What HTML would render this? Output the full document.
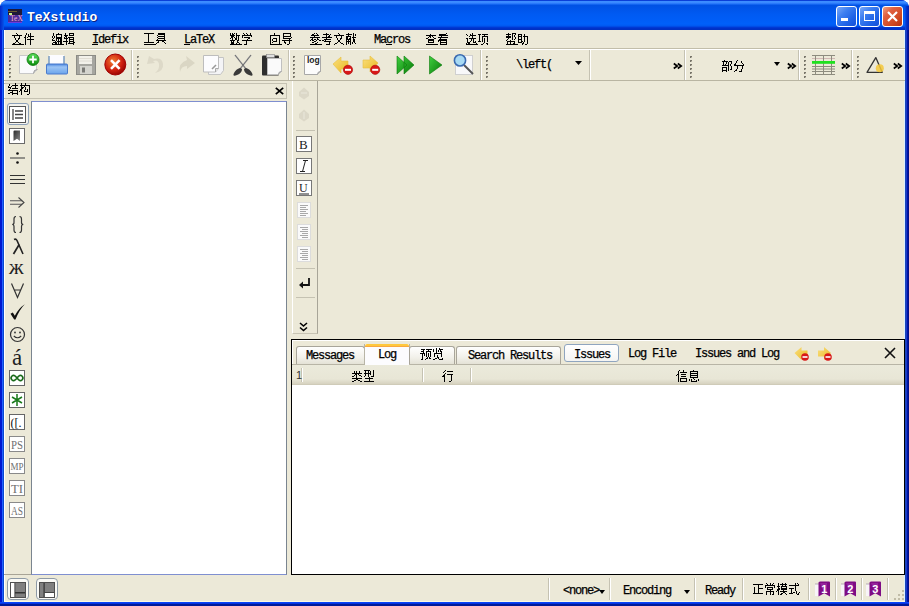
<!DOCTYPE html><html><head><meta charset="utf-8"><style>
html,body{margin:0;padding:0;width:909px;height:606px;overflow:hidden;background:#fff;}
body>div,body>span,body>svg{position:absolute;}
.t{position:absolute;white-space:pre;line-height:14px;}
.cj{position:absolute;shape-rendering:crispEdges;}
svg{overflow:visible;}
</style></head><body>
<div style="left:0px;top:0px;width:909px;height:606px;background:#0831D9;border-radius:8px 8px 0 0;"></div>
<div style="left:0px;top:0px;width:909px;height:30px;background:linear-gradient(#0A3FD8 0px,#0A3FD8 1px,#3D8EFF 1px,#3A88FF 3px,#1A6CF6 4px,#0052E4 5.5px,#0054E8 8px,#005AF2 14px,#0060FA 24px,#0058F0 26px,#0040DC 27px,#0032CC 28px,#0030C0 30px);border-radius:8px 8px 0 0;"></div>
<div style="left:0px;top:6px;width:4px;height:24px;background:linear-gradient(90deg,#0028C8,#0848E0 3px,#0058F0 4px);"></div>
<div style="left:905px;top:6px;width:4px;height:24px;background:linear-gradient(90deg,#0850E8,#0838D0 1px,#0028C0 3px,#0020B0 4px);"></div>
<div style="left:0px;top:30px;width:4px;height:576px;background:linear-gradient(90deg,#0018D0 0px,#0018D0 2px,#2262FF 2px,#2262FF 3px,#0A48D0 3px);"></div>
<div style="left:4px;top:30px;width:1px;height:572px;background:#FFFFFF;"></div>
<div style="left:905px;top:30px;width:4px;height:576px;background:linear-gradient(90deg,#1A48B8 0px,#1A48B8 1px,#1A3AC8 1px,#1A3AC8 2px,#0014A8 2px,#0014A8 3px,#001088 3px);"></div>
<div style="left:904px;top:30px;width:1px;height:572px;background:#DCEEFF;"></div>
<div style="left:0px;top:602px;width:909px;height:4px;background:linear-gradient(#0844F8 0px,#0844F8 1px,#0634E0 1px,#0634E0 2px,#001A98 2px);"></div>
<div style="left:4px;top:601px;width:901px;height:1px;background:#FBF8E2;"></div>
<div style="left:5px;top:30px;width:899px;height:571px;background:#ECE9D8;"></div>
<svg style="left:8px;top:9px;" width="14" height="14" viewBox="0 0 14 14"><rect x="0" y="0" width="14" height="14" fill="#4A2A9A"/><rect x="0" y="0" width="14" height="6" fill="#1E1838"/><rect x="0" y="2" width="9" height="1" fill="#6A5A30"/><rect x="1" y="4" width="3" height="2" fill="#C8F080"/><rect x="0" y="13" width="14" height="1" fill="#6A3AE0"/><text x="2" y="12" font-family="Liberation Serif" font-size="7.5" fill="#F0B0D0">TeX</text></svg>
<span class="t" style="left:27px;top:11px;font-family:Liberation Mono;font-weight:bold;font-size:13px;letter-spacing:0px;color:#0A1E80;left:28px;top:12px;">TeXstudio</span>
<span class="t" style="left:27px;top:11px;font-family:Liberation Mono;font-weight:bold;font-size:13px;color:#fff;letter-spacing:0px;">TeXstudio</span>
<div style="left:836px;top:6px;width:21px;height:21px;background:linear-gradient(135deg,#7AA8F8 0%,#3C7EF0 35%,#1F62E6 70%,#1550D8 100%);border:1px solid #fff;box-sizing:border-box;border-radius:3px;"></div>
<div style="left:841px;top:18px;width:7px;height:3px;background:#fff;"></div>
<div style="left:859px;top:6px;width:21px;height:21px;background:linear-gradient(135deg,#7AA8F8 0%,#3C7EF0 35%,#1F62E6 70%,#1550D8 100%);border:1px solid #fff;box-sizing:border-box;border-radius:3px;"></div>
<div style="left:864px;top:11px;width:11px;height:10px;border:1px solid #fff;border-top-width:3px;box-sizing:border-box;"></div>
<div style="left:882px;top:6px;width:21px;height:21px;background:linear-gradient(135deg,#F0A080 0%,#E06040 30%,#D04820 70%,#B83010 100%);border:1px solid #fff;box-sizing:border-box;border-radius:3px;"></div>
<svg style="left:886px;top:10px;" width="13" height="13" viewBox="0 0 13 13"><path d="M2 2L11 11M11 2L2 11" stroke="#fff" stroke-width="2.2"/></svg>
<svg class="cj" style="left:12px;top:33px" width="22" height="12"><path fill="#000" d="M4 0h1v1h-1zM14 0h1v1h-1zM18 0h1v1h-1zM5 1h1v1h-1zM14 1h1v1h-1zM16 1h1v1h-1zM18 1h1v1h-1zM0 2h10v1h-10zM13 2h1v1h-1zM16 2h1v1h-1zM18 2h1v1h-1zM2 3h1v1h-1zM7 3h1v1h-1zM13 3h1v1h-1zM16 3h6v1h-6zM2 4h1v1h-1zM7 4h1v1h-1zM12 4h2v1h-2zM15 4h1v1h-1zM18 4h1v1h-1zM3 5h1v1h-1zM6 5h2v1h-2zM13 5h1v1h-1zM18 5h1v1h-1zM3 6h1v1h-1zM6 6h1v1h-1zM13 6h1v1h-1zM15 6h7v1h-7zM4 7h2v1h-2zM13 7h1v1h-1zM18 7h1v1h-1zM4 8h2v1h-2zM13 8h1v1h-1zM18 8h1v1h-1zM3 9h1v1h-1zM6 9h1v1h-1zM13 9h1v1h-1zM18 9h1v1h-1zM1 10h2v1h-2zM7 10h2v1h-2zM13 10h1v1h-1zM18 10h1v1h-1zM0 11h1v1h-1zM9 11h1v1h-1zM13 11h1v1h-1zM18 11h1v1h-1z"/></svg>
<svg class="cj" style="left:52px;top:33px" width="23" height="12"><path fill="#000" d="M1 0h1v1h-1zM6 0h1v1h-1zM13 0h1v1h-1zM17 0h5v1h-5zM1 1h1v1h-1zM4 1h6v1h-6zM13 1h1v1h-1zM17 1h1v1h-1zM21 1h1v1h-1zM1 2h1v1h-1zM4 2h1v1h-1zM9 2h1v1h-1zM12 2h4v1h-4zM17 2h5v1h-5zM0 3h1v1h-1zM2 3h1v1h-1zM4 3h1v1h-1zM9 3h1v1h-1zM13 3h2v1h-2zM0 4h1v1h-1zM2 4h1v1h-1zM4 4h6v1h-6zM12 4h1v1h-1zM14 4h1v1h-1zM16 4h6v1h-6zM1 5h1v1h-1zM4 5h6v1h-6zM12 5h4v1h-4zM17 5h1v1h-1zM21 5h1v1h-1zM0 6h1v1h-1zM4 6h1v1h-1zM6 6h1v1h-1zM8 6h2v1h-2zM14 6h1v1h-1zM17 6h5v1h-5zM0 7h3v1h-3zM4 7h1v1h-1zM6 7h1v1h-1zM8 7h2v1h-2zM14 7h1v1h-1zM17 7h1v1h-1zM21 7h1v1h-1zM3 8h1v1h-1zM5 8h5v1h-5zM11 8h5v1h-5zM17 8h5v1h-5zM1 9h4v1h-4zM6 9h1v1h-1zM8 9h2v1h-2zM14 9h1v1h-1zM17 9h1v1h-1zM21 9h2v1h-2zM0 10h1v1h-1zM3 10h2v1h-2zM6 10h1v1h-1zM8 10h2v1h-2zM14 10h1v1h-1zM16 10h6v1h-6zM3 11h1v1h-1zM9 11h1v1h-1zM14 11h1v1h-1zM21 11h1v1h-1z"/></svg>
<span class="t" style="left:92px;top:33px;font-family:Liberation Mono;font-size:12px;letter-spacing:-1.2px;color:#000;-webkit-text-stroke:0.25px #000;">Idefix</span>
<svg class="cj" style="left:144px;top:33px" width="22" height="11"><path fill="#000" d="M0 0h10v1h-10zM14 0h7v1h-7zM4 1h1v1h-1zM14 1h7v1h-7zM4 2h1v1h-1zM13 2h1v1h-1zM20 2h1v1h-1zM4 3h1v1h-1zM14 3h7v1h-7zM4 4h1v1h-1zM13 4h1v1h-1zM20 4h1v1h-1zM4 5h1v1h-1zM14 5h7v1h-7zM4 6h1v1h-1zM13 6h1v1h-1zM20 6h1v1h-1zM4 7h1v1h-1zM12 7h10v1h-10zM4 8h1v1h-1zM14 8h1v1h-1zM18 8h2v1h-2zM0 9h10v1h-10zM13 9h2v1h-2zM20 9h1v1h-1zM12 10h1v1h-1zM21 10h1v1h-1z"/></svg>
<span class="t" style="left:184px;top:33px;font-family:Liberation Mono;font-size:12px;letter-spacing:-1.2px;color:#000;-webkit-text-stroke:0.25px #000;">LaTeX</span>
<svg class="cj" style="left:230px;top:33px" width="22" height="12"><path fill="#000" d="M0 0h1v1h-1zM2 0h1v1h-1zM4 0h1v1h-1zM6 0h1v1h-1zM13 0h1v1h-1zM16 0h1v1h-1zM20 0h1v1h-1zM0 1h1v1h-1zM2 1h2v1h-2zM6 1h1v1h-1zM14 1h1v1h-1zM17 1h1v1h-1zM20 1h1v1h-1zM0 2h5v1h-5zM6 2h4v1h-4zM12 2h10v1h-10zM1 3h3v1h-3zM6 3h1v1h-1zM8 3h1v1h-1zM12 3h1v1h-1zM21 3h1v1h-1zM1 4h2v1h-2zM4 4h1v1h-1zM6 4h1v1h-1zM8 4h1v1h-1zM12 4h1v1h-1zM14 4h6v1h-6zM0 5h1v1h-1zM2 5h1v1h-1zM5 5h2v1h-2zM8 5h1v1h-1zM18 5h2v1h-2zM2 6h1v1h-1zM5 6h2v1h-2zM8 6h1v1h-1zM17 6h1v1h-1zM0 7h5v1h-5zM7 7h2v1h-2zM12 7h10v1h-10zM1 8h1v1h-1zM3 8h1v1h-1zM7 8h1v1h-1zM16 8h1v1h-1zM1 9h3v1h-3zM7 9h2v1h-2zM16 9h1v1h-1zM1 10h3v1h-3zM6 10h1v1h-1zM9 10h1v1h-1zM16 10h1v1h-1zM0 11h1v1h-1zM5 11h1v1h-1zM9 11h1v1h-1zM14 11h3v1h-3z"/></svg>
<svg class="cj" style="left:270px;top:33px" width="22" height="12"><path fill="#000" d="M4 0h1v1h-1zM13 0h8v1h-8zM4 1h1v1h-1zM13 1h1v1h-1zM20 1h1v1h-1zM0 2h10v1h-10zM13 2h1v1h-1zM20 2h1v1h-1zM0 3h1v1h-1zM9 3h1v1h-1zM13 3h8v1h-8zM0 4h1v1h-1zM9 4h1v1h-1zM13 4h1v1h-1zM21 4h1v1h-1zM0 5h1v1h-1zM3 5h4v1h-4zM9 5h1v1h-1zM13 5h8v1h-8zM0 6h1v1h-1zM2 6h1v1h-1zM6 6h1v1h-1zM9 6h1v1h-1zM19 6h1v1h-1zM0 7h1v1h-1zM2 7h1v1h-1zM6 7h1v1h-1zM9 7h1v1h-1zM12 7h10v1h-10zM0 8h1v1h-1zM3 8h4v1h-4zM9 8h1v1h-1zM14 8h1v1h-1zM19 8h1v1h-1zM0 9h1v1h-1zM2 9h1v1h-1zM9 9h1v1h-1zM14 9h2v1h-2zM19 9h1v1h-1zM0 10h1v1h-1zM9 10h1v1h-1zM15 10h1v1h-1zM19 10h1v1h-1zM0 11h1v1h-1zM7 11h3v1h-3zM17 11h2v1h-2z"/></svg>
<svg class="cj" style="left:310px;top:33px" width="46" height="12"><path fill="#000" d="M4 0h1v1h-1zM6 0h1v1h-1zM16 0h1v1h-1zM28 0h1v1h-1zM38 0h1v1h-1zM43 0h1v1h-1zM2 1h2v1h-2zM7 1h1v1h-1zM13 1h6v1h-6zM20 1h1v1h-1zM29 1h1v1h-1zM36 1h6v1h-6zM43 1h1v1h-1zM45 1h1v1h-1zM1 2h8v1h-8zM16 2h1v1h-1zM19 2h1v1h-1zM24 2h10v1h-10zM38 2h1v1h-1zM43 2h1v1h-1zM45 2h1v1h-1zM4 3h1v1h-1zM16 3h1v1h-1zM18 3h2v1h-2zM26 3h1v1h-1zM31 3h1v1h-1zM36 3h5v1h-5zM43 3h1v1h-1zM0 4h10v1h-10zM12 4h10v1h-10zM26 4h1v1h-1zM31 4h1v1h-1zM36 4h2v1h-2zM40 4h1v1h-1zM42 4h4v1h-4zM2 5h1v1h-1zM7 5h1v1h-1zM16 5h1v1h-1zM27 5h1v1h-1zM30 5h2v1h-2zM36 5h2v1h-2zM39 5h2v1h-2zM43 5h1v1h-1zM1 6h2v1h-2zM4 6h2v1h-2zM7 6h2v1h-2zM14 6h7v1h-7zM27 6h1v1h-1zM30 6h1v1h-1zM36 6h5v1h-5zM43 6h2v1h-2zM0 7h1v1h-1zM2 7h2v1h-2zM6 7h1v1h-1zM9 7h2v1h-2zM12 7h2v1h-2zM15 7h1v1h-1zM28 7h2v1h-2zM36 7h1v1h-1zM38 7h1v1h-1zM40 7h1v1h-1zM43 7h2v1h-2zM4 8h2v1h-2zM14 8h7v1h-7zM28 8h2v1h-2zM36 8h5v1h-5zM43 8h2v1h-2zM2 9h2v1h-2zM7 9h1v1h-1zM19 9h1v1h-1zM27 9h1v1h-1zM30 9h1v1h-1zM36 9h1v1h-1zM38 9h1v1h-1zM40 9h1v1h-1zM42 9h1v1h-1zM44 9h1v1h-1zM5 10h2v1h-2zM19 10h1v1h-1zM25 10h2v1h-2zM31 10h2v1h-2zM36 10h1v1h-1zM38 10h1v1h-1zM40 10h1v1h-1zM42 10h1v1h-1zM45 10h1v1h-1zM1 11h4v1h-4zM16 11h4v1h-4zM24 11h1v1h-1zM33 11h1v1h-1zM36 11h1v1h-1zM40 11h1v1h-1z"/></svg>
<span class="t" style="left:374px;top:33px;font-family:Liberation Mono;font-size:12px;letter-spacing:-1.2px;color:#000;-webkit-text-stroke:0.25px #000;">Macros</span>
<svg class="cj" style="left:426px;top:33px" width="22" height="12"><path fill="#000" d="M20 0h1v1h-1zM4 1h1v1h-1zM13 1h7v1h-7zM0 2h10v1h-10zM13 2h9v1h-9zM3 3h2v1h-2zM6 3h1v1h-1zM15 3h1v1h-1zM2 4h1v1h-1zM4 4h1v1h-1zM7 4h1v1h-1zM12 4h10v1h-10zM0 5h2v1h-2zM8 5h2v1h-2zM14 5h1v1h-1zM2 6h6v1h-6zM13 6h8v1h-8zM2 7h6v1h-6zM12 7h9v1h-9zM2 8h1v1h-1zM7 8h1v1h-1zM12 8h1v1h-1zM14 8h1v1h-1zM20 8h1v1h-1zM2 9h6v1h-6zM14 9h7v1h-7zM14 10h1v1h-1zM20 10h1v1h-1zM0 11h10v1h-10zM14 11h7v1h-7z"/></svg>
<svg class="cj" style="left:466px;top:33px" width="22" height="12"><path fill="#000" d="M6 0h1v1h-1zM0 1h1v1h-1zM4 1h1v1h-1zM6 1h1v1h-1zM12 1h3v1h-3zM16 1h6v1h-6zM1 2h1v1h-1zM4 2h6v1h-6zM13 2h1v1h-1zM18 2h1v1h-1zM3 3h1v1h-1zM6 3h1v1h-1zM13 3h1v1h-1zM16 3h6v1h-6zM6 4h1v1h-1zM13 4h1v1h-1zM16 4h1v1h-1zM21 4h1v1h-1zM0 5h2v1h-2zM3 5h7v1h-7zM13 5h1v1h-1zM16 5h1v1h-1zM18 5h1v1h-1zM21 5h1v1h-1zM1 6h1v1h-1zM5 6h1v1h-1zM7 6h1v1h-1zM13 6h1v1h-1zM16 6h1v1h-1zM18 6h1v1h-1zM21 6h1v1h-1zM1 7h1v1h-1zM5 7h1v1h-1zM7 7h1v1h-1zM13 7h1v1h-1zM16 7h1v1h-1zM18 7h1v1h-1zM21 7h1v1h-1zM1 8h1v1h-1zM4 8h1v1h-1zM7 8h1v1h-1zM9 8h1v1h-1zM12 8h3v1h-3zM16 8h1v1h-1zM18 8h1v1h-1zM21 8h1v1h-1zM1 9h3v1h-3zM7 9h3v1h-3zM18 9h1v1h-1zM0 10h1v1h-1zM2 10h2v1h-2zM10 10h1v1h-1zM17 10h1v1h-1zM20 10h2v1h-2zM0 11h1v1h-1zM3 11h7v1h-7zM15 11h2v1h-2zM21 11h1v1h-1z"/></svg>
<svg class="cj" style="left:506px;top:33px" width="22" height="12"><path fill="#000" d="M2 0h1v1h-1zM6 0h4v1h-4zM0 1h5v1h-5zM6 1h1v1h-1zM9 1h1v1h-1zM12 1h4v1h-4zM18 1h1v1h-1zM2 2h1v1h-1zM6 2h1v1h-1zM8 2h1v1h-1zM12 2h1v1h-1zM15 2h1v1h-1zM18 2h1v1h-1zM0 3h5v1h-5zM6 3h1v1h-1zM8 3h1v1h-1zM12 3h4v1h-4zM17 3h5v1h-5zM0 4h5v1h-5zM6 4h1v1h-1zM9 4h1v1h-1zM12 4h1v1h-1zM15 4h1v1h-1zM18 4h1v1h-1zM21 4h1v1h-1zM2 5h1v1h-1zM6 5h1v1h-1zM9 5h1v1h-1zM12 5h1v1h-1zM15 5h1v1h-1zM18 5h1v1h-1zM21 5h1v1h-1zM1 6h1v1h-1zM6 6h1v1h-1zM8 6h1v1h-1zM12 6h4v1h-4zM18 6h1v1h-1zM21 6h1v1h-1zM0 7h1v1h-1zM4 7h1v1h-1zM12 7h1v1h-1zM15 7h1v1h-1zM18 7h1v1h-1zM21 7h1v1h-1zM1 8h8v1h-8zM12 8h1v1h-1zM15 8h2v1h-2zM18 8h1v1h-1zM21 8h1v1h-1zM1 9h1v1h-1zM4 9h1v1h-1zM8 9h1v1h-1zM12 9h4v1h-4zM17 9h1v1h-1zM21 9h1v1h-1zM1 10h1v1h-1zM4 10h1v1h-1zM7 10h2v1h-2zM16 10h2v1h-2zM21 10h1v1h-1zM4 11h1v1h-1zM16 11h1v1h-1zM19 11h2v1h-2z"/></svg>
<div style="left:12px;top:44px;width:12px;height:1px;background:#000;"></div>
<div style="left:52px;top:44px;width:12px;height:1px;background:#000;"></div>
<div style="left:92px;top:44px;width:6px;height:1px;background:#000;"></div>
<div style="left:144px;top:44px;width:12px;height:1px;background:#000;"></div>
<div style="left:184px;top:44px;width:6px;height:1px;background:#000;"></div>
<div style="left:230px;top:44px;width:12px;height:1px;background:#000;"></div>
<div style="left:270px;top:44px;width:12px;height:1px;background:#000;"></div>
<div style="left:310px;top:44px;width:12px;height:1px;background:#000;"></div>
<div style="left:386px;top:44px;width:6px;height:1px;background:#000;"></div>
<div style="left:426px;top:44px;width:12px;height:1px;background:#000;"></div>
<div style="left:466px;top:44px;width:12px;height:1px;background:#000;"></div>
<div style="left:506px;top:44px;width:12px;height:1px;background:#000;"></div>
<div style="left:4px;top:48px;width:901px;height:1px;background:#C2BEAA;"></div>
<div style="left:4px;top:49px;width:901px;height:1px;background:#FFFFFF;"></div>
<div style="left:4px;top:80px;width:901px;height:1px;background:#B9B5A2;"></div>
<div style="left:9px;top:56px;width:2px;height:2px;background:#78756A;"></div>
<div style="left:10px;top:57px;width:1px;height:1px;background:#B8B4A4;"></div>
<div style="left:9px;top:60px;width:2px;height:2px;background:#78756A;"></div>
<div style="left:10px;top:61px;width:1px;height:1px;background:#B8B4A4;"></div>
<div style="left:9px;top:64px;width:2px;height:2px;background:#78756A;"></div>
<div style="left:10px;top:65px;width:1px;height:1px;background:#B8B4A4;"></div>
<div style="left:9px;top:68px;width:2px;height:2px;background:#78756A;"></div>
<div style="left:10px;top:69px;width:1px;height:1px;background:#B8B4A4;"></div>
<div style="left:9px;top:72px;width:2px;height:2px;background:#78756A;"></div>
<div style="left:10px;top:73px;width:1px;height:1px;background:#B8B4A4;"></div>
<div style="left:9px;top:76px;width:2px;height:2px;background:#78756A;"></div>
<div style="left:10px;top:77px;width:1px;height:1px;background:#B8B4A4;"></div>
<div style="left:137px;top:56px;width:2px;height:2px;background:#78756A;"></div>
<div style="left:138px;top:57px;width:1px;height:1px;background:#B8B4A4;"></div>
<div style="left:137px;top:60px;width:2px;height:2px;background:#78756A;"></div>
<div style="left:138px;top:61px;width:1px;height:1px;background:#B8B4A4;"></div>
<div style="left:137px;top:64px;width:2px;height:2px;background:#78756A;"></div>
<div style="left:138px;top:65px;width:1px;height:1px;background:#B8B4A4;"></div>
<div style="left:137px;top:68px;width:2px;height:2px;background:#78756A;"></div>
<div style="left:138px;top:69px;width:1px;height:1px;background:#B8B4A4;"></div>
<div style="left:137px;top:72px;width:2px;height:2px;background:#78756A;"></div>
<div style="left:138px;top:73px;width:1px;height:1px;background:#B8B4A4;"></div>
<div style="left:137px;top:76px;width:2px;height:2px;background:#78756A;"></div>
<div style="left:138px;top:77px;width:1px;height:1px;background:#B8B4A4;"></div>
<div style="left:293px;top:56px;width:2px;height:2px;background:#78756A;"></div>
<div style="left:294px;top:57px;width:1px;height:1px;background:#B8B4A4;"></div>
<div style="left:293px;top:60px;width:2px;height:2px;background:#78756A;"></div>
<div style="left:294px;top:61px;width:1px;height:1px;background:#B8B4A4;"></div>
<div style="left:293px;top:64px;width:2px;height:2px;background:#78756A;"></div>
<div style="left:294px;top:65px;width:1px;height:1px;background:#B8B4A4;"></div>
<div style="left:293px;top:68px;width:2px;height:2px;background:#78756A;"></div>
<div style="left:294px;top:69px;width:1px;height:1px;background:#B8B4A4;"></div>
<div style="left:293px;top:72px;width:2px;height:2px;background:#78756A;"></div>
<div style="left:294px;top:73px;width:1px;height:1px;background:#B8B4A4;"></div>
<div style="left:293px;top:76px;width:2px;height:2px;background:#78756A;"></div>
<div style="left:294px;top:77px;width:1px;height:1px;background:#B8B4A4;"></div>
<div style="left:486px;top:56px;width:2px;height:2px;background:#78756A;"></div>
<div style="left:487px;top:57px;width:1px;height:1px;background:#B8B4A4;"></div>
<div style="left:486px;top:60px;width:2px;height:2px;background:#78756A;"></div>
<div style="left:487px;top:61px;width:1px;height:1px;background:#B8B4A4;"></div>
<div style="left:486px;top:64px;width:2px;height:2px;background:#78756A;"></div>
<div style="left:487px;top:65px;width:1px;height:1px;background:#B8B4A4;"></div>
<div style="left:486px;top:68px;width:2px;height:2px;background:#78756A;"></div>
<div style="left:487px;top:69px;width:1px;height:1px;background:#B8B4A4;"></div>
<div style="left:486px;top:72px;width:2px;height:2px;background:#78756A;"></div>
<div style="left:487px;top:73px;width:1px;height:1px;background:#B8B4A4;"></div>
<div style="left:486px;top:76px;width:2px;height:2px;background:#78756A;"></div>
<div style="left:487px;top:77px;width:1px;height:1px;background:#B8B4A4;"></div>
<div style="left:690px;top:56px;width:2px;height:2px;background:#78756A;"></div>
<div style="left:691px;top:57px;width:1px;height:1px;background:#B8B4A4;"></div>
<div style="left:690px;top:60px;width:2px;height:2px;background:#78756A;"></div>
<div style="left:691px;top:61px;width:1px;height:1px;background:#B8B4A4;"></div>
<div style="left:690px;top:64px;width:2px;height:2px;background:#78756A;"></div>
<div style="left:691px;top:65px;width:1px;height:1px;background:#B8B4A4;"></div>
<div style="left:690px;top:68px;width:2px;height:2px;background:#78756A;"></div>
<div style="left:691px;top:69px;width:1px;height:1px;background:#B8B4A4;"></div>
<div style="left:690px;top:72px;width:2px;height:2px;background:#78756A;"></div>
<div style="left:691px;top:73px;width:1px;height:1px;background:#B8B4A4;"></div>
<div style="left:690px;top:76px;width:2px;height:2px;background:#78756A;"></div>
<div style="left:691px;top:77px;width:1px;height:1px;background:#B8B4A4;"></div>
<div style="left:804px;top:56px;width:2px;height:2px;background:#78756A;"></div>
<div style="left:805px;top:57px;width:1px;height:1px;background:#B8B4A4;"></div>
<div style="left:804px;top:60px;width:2px;height:2px;background:#78756A;"></div>
<div style="left:805px;top:61px;width:1px;height:1px;background:#B8B4A4;"></div>
<div style="left:804px;top:64px;width:2px;height:2px;background:#78756A;"></div>
<div style="left:805px;top:65px;width:1px;height:1px;background:#B8B4A4;"></div>
<div style="left:804px;top:68px;width:2px;height:2px;background:#78756A;"></div>
<div style="left:805px;top:69px;width:1px;height:1px;background:#B8B4A4;"></div>
<div style="left:804px;top:72px;width:2px;height:2px;background:#78756A;"></div>
<div style="left:805px;top:73px;width:1px;height:1px;background:#B8B4A4;"></div>
<div style="left:804px;top:76px;width:2px;height:2px;background:#78756A;"></div>
<div style="left:805px;top:77px;width:1px;height:1px;background:#B8B4A4;"></div>
<div style="left:857px;top:56px;width:2px;height:2px;background:#78756A;"></div>
<div style="left:858px;top:57px;width:1px;height:1px;background:#B8B4A4;"></div>
<div style="left:857px;top:60px;width:2px;height:2px;background:#78756A;"></div>
<div style="left:858px;top:61px;width:1px;height:1px;background:#B8B4A4;"></div>
<div style="left:857px;top:64px;width:2px;height:2px;background:#78756A;"></div>
<div style="left:858px;top:65px;width:1px;height:1px;background:#B8B4A4;"></div>
<div style="left:857px;top:68px;width:2px;height:2px;background:#78756A;"></div>
<div style="left:858px;top:69px;width:1px;height:1px;background:#B8B4A4;"></div>
<div style="left:857px;top:72px;width:2px;height:2px;background:#78756A;"></div>
<div style="left:858px;top:73px;width:1px;height:1px;background:#B8B4A4;"></div>
<div style="left:857px;top:76px;width:2px;height:2px;background:#78756A;"></div>
<div style="left:858px;top:77px;width:1px;height:1px;background:#B8B4A4;"></div>
<div style="left:131px;top:50px;width:1px;height:30px;background:#C5C2B2;"></div>
<div style="left:132px;top:50px;width:1px;height:30px;background:#fff;"></div>
<div style="left:288px;top:50px;width:1px;height:30px;background:#C5C2B2;"></div>
<div style="left:289px;top:50px;width:1px;height:30px;background:#fff;"></div>
<div style="left:480px;top:50px;width:1px;height:30px;background:#C5C2B2;"></div>
<div style="left:481px;top:50px;width:1px;height:30px;background:#fff;"></div>
<div style="left:684px;top:50px;width:1px;height:30px;background:#C5C2B2;"></div>
<div style="left:685px;top:50px;width:1px;height:30px;background:#fff;"></div>
<div style="left:798px;top:50px;width:1px;height:30px;background:#C5C2B2;"></div>
<div style="left:799px;top:50px;width:1px;height:30px;background:#fff;"></div>
<div style="left:851px;top:50px;width:1px;height:30px;background:#C5C2B2;"></div>
<div style="left:852px;top:50px;width:1px;height:30px;background:#fff;"></div>
<svg style="left:0;top:0" width="0" height="0"><defs>
<linearGradient id="gGreen" x1="0" y1="0" x2="0" y2="1"><stop offset="0" stop-color="#5CE05C"/><stop offset="1" stop-color="#0A8A0A"/></linearGradient>
<radialGradient id="gRed" cx="0.4" cy="0.35" r="0.7"><stop offset="0" stop-color="#F08030"/><stop offset="0.6" stop-color="#D02010"/><stop offset="1" stop-color="#900000"/></radialGradient>
<linearGradient id="gBlue" x1="0" y1="0" x2="0" y2="1"><stop offset="0" stop-color="#4A86E0"/><stop offset="0.3" stop-color="#9CC4F4"/><stop offset="1" stop-color="#6AA4EC"/></linearGradient>
<linearGradient id="gPlay" x1="0" y1="0" x2="1" y2="1"><stop offset="0" stop-color="#40D040"/><stop offset="1" stop-color="#087A08"/></linearGradient>
<linearGradient id="gYel" x1="0" y1="0" x2="1" y2="1"><stop offset="0" stop-color="#FBE080"/><stop offset="1" stop-color="#E8B820"/></linearGradient>
</defs></svg>
<svg style="left:17px;top:53px;" width="24" height="24" viewBox="0 0 24 24"><path d="M2.5 2.5h13l4 4v11l-3 3h-14z" fill="#FAFAFC" stroke="#C8C8C8"/><path d="M16.5 20.5q0-4 4-4" fill="#DDD" stroke="#999"/><circle cx="16" cy="6.5" r="6" fill="url(#gGreen)" stroke="#0A7A0A" stroke-width="0.8"/><path d="M16 2.8v7.4M12.3 6.5h7.4" stroke="#fff" stroke-width="1.8"/></svg>
<svg style="left:45px;top:53px;" width="24" height="24" viewBox="0 0 24 24"><rect x="4" y="2" width="15" height="10" fill="#FCFCFF"/><path d="M4 3v9M19 3v9" stroke="#7A9AC0" stroke-width="1.5"/><rect x="1.5" y="11" width="21" height="10" rx="1" fill="url(#gBlue)" stroke="#4A7ACC" stroke-width="1"/></svg>
<svg style="left:75px;top:53px;" width="22" height="24" viewBox="0 0 22 24"><rect x="1.5" y="2.5" width="19" height="19" fill="#A6A6A0" stroke="#8C8C86" stroke-width="1"/><rect x="4" y="3" width="13" height="8" fill="#F2F1EA"/><path d="M4 5.5h13M4 8h13" stroke="#DAD8CE" stroke-width="0.8"/><rect x="5" y="13" width="12" height="8" fill="#D4D4CE"/><rect x="7" y="14.5" width="3" height="5" fill="#7A7A76"/></svg>
<svg style="left:104px;top:53px;" width="23" height="23" viewBox="0 0 23 23"><circle cx="11.3" cy="11.5" r="10.5" fill="url(#gRed)" stroke="#A00000" stroke-width="1"/><path d="M7 7.2L15.6 15.8M15.6 7.2L7 15.8" stroke="#fff" stroke-width="2.6"/></svg>
<svg style="left:145px;top:53px;" width="20" height="22" viewBox="0 0 20 22"><path d="M4 3l-2 8 8-1-2-2q5-2 6 3t-4 9q9-2 8-9t-9-5z" fill="#DDD9C8"/></svg>
<svg style="left:176px;top:53px;" width="20" height="22" viewBox="0 0 20 22"><path d="M10 3l9 7-8 6v-3q-6 0-7 6-2-9 7-12z" fill="#DAD6C4"/></svg>
<svg style="left:202px;top:53px;" width="24" height="24" viewBox="0 0 24 24"><path d="M6.5 4.5h15v13l-3 4h-12z" fill="#F4F4F6" stroke="#C4C4C4"/><path d="M1.5 2.5h15v13l-3 3.5h-12z" fill="#FCFCFE" stroke="#BDBDBD"/><path d="M13.5 19v-3.5h3" fill="#E4E4E4" stroke="#A8A8A8"/><path d="M10 16l4-4" stroke="#999" stroke-width="1.6"/></svg>
<svg style="left:232px;top:53px;" width="22" height="24" viewBox="0 0 22 24"><path d="M3 2l11 14M19 2L8 16" stroke="#B0B0B0" stroke-width="1.6"/><path d="M3 2l11 14M19 2L8 16" stroke="#555" stroke-width="0.7"/><path d="M8 15q-4 1-6 5t3 2 5-6zM14 15q4 1 6 5t-3 2-5-6z" fill="#3A3A3A"/></svg>
<svg style="left:260px;top:53px;" width="24" height="24" viewBox="0 0 24 24"><rect x="2" y="2.5" width="17" height="20" rx="1" fill="#2E2E2E"/><rect x="6.5" y="1.5" width="8" height="3" fill="#E0E0E0" stroke="#888" stroke-width="0.6"/><path d="M7.5 5.5h14v13l-3 3h-11z" fill="#FAFAFA" stroke="#C0C0C0"/><path d="M18.5 21.5q0-3 3-3" fill="#DDD" stroke="#999"/></svg>
<svg style="left:303px;top:53px;" width="20" height="24" viewBox="0 0 20 24"><path d="M1.5 2.5h16v16l-3 3h-13z" fill="#FCFCFC" stroke="#A8A8A8"/><path d="M14.5 21.5q0-3 3-3" fill="#DDD" stroke="#999"/><text x="4" y="10" font-family="Liberation Sans" font-size="8.5" font-weight="bold" fill="#222">log</text></svg>
<svg style="left:331px;top:53px;" width="24" height="24" viewBox="0 0 24 24"><path d="M2 11l8-7v4h7v8h-7v4z" fill="url(#gYel)" stroke="#E8C040" stroke-width="0.6"/><circle cx="17" cy="16.8" r="4.6" fill="#D81818" stroke="#A00" stroke-width="0.6"/><rect x="14" y="15.8" width="6" height="2" fill="#fff"/></svg>
<svg style="left:359px;top:53px;" width="24" height="24" viewBox="0 0 24 24"><path d="M19 10l-8-7v4H4v8h7v4z" fill="url(#gYel)" stroke="#E8C040" stroke-width="0.6"/><circle cx="16.2" cy="16.8" r="4.6" fill="#D81818" stroke="#A00" stroke-width="0.6"/><rect x="13.2" y="15.8" width="6" height="2" fill="#fff"/></svg>
<svg style="left:396px;top:53px;" width="22" height="22" viewBox="0 0 22 22"><path d="M1 3l10 9-10 9zM8 3l10 9-10 9z" fill="url(#gPlay)" stroke="#0A7A0A" stroke-width="0.6"/></svg>
<svg style="left:428px;top:53px;" width="16" height="22" viewBox="0 0 16 22"><path d="M1.5 3l12.5 9-12.5 9z" fill="url(#gPlay)" stroke="#0A7A0A" stroke-width="0.6"/></svg>
<svg style="left:452px;top:53px;" width="24" height="24" viewBox="0 0 24 24"><rect x="3.5" y="2.5" width="17" height="19" fill="#F8F8FA" stroke="#D0D0D0"/><path d="M12 12l9 9" stroke="#555" stroke-width="2"/><circle cx="8" cy="7.4" r="5.6" fill="#A8DAF4" stroke="#3A6AB0" stroke-width="1.6"/></svg>
<span class="t" style="left:516px;top:58px;font-family:Liberation Mono;font-size:12px;letter-spacing:-1.2px;color:#000;-webkit-text-stroke:0.25px #000;">\left(</span>
<svg style="left:575px;top:61px;" width="8" height="5" viewBox="0 0 8 5"><path d="M0 0h7l-3.5 4z" fill="#000"/></svg>
<div style="left:589px;top:50px;width:1px;height:30px;background:#C5C2B2;"></div>
<div style="left:590px;top:50px;width:1px;height:30px;background:#fff;"></div>
<svg style="left:673px;top:63px;" width="10" height="6" viewBox="0 0 10 6"><path d="M0.8 0.5l3.4 2.5-3.4 2.5M4.8 0.5l3.4 2.5-3.4 2.5" fill="none" stroke="#000" stroke-width="1.7"/></svg>
<svg style="left:787px;top:63px;" width="10" height="6" viewBox="0 0 10 6"><path d="M0.8 0.5l3.4 2.5-3.4 2.5M4.8 0.5l3.4 2.5-3.4 2.5" fill="none" stroke="#000" stroke-width="1.7"/></svg>
<svg style="left:841px;top:63px;" width="10" height="6" viewBox="0 0 10 6"><path d="M0.8 0.5l3.4 2.5-3.4 2.5M4.8 0.5l3.4 2.5-3.4 2.5" fill="none" stroke="#000" stroke-width="1.7"/></svg>
<svg style="left:893px;top:63px;" width="10" height="6" viewBox="0 0 10 6"><path d="M0.8 0.5l3.4 2.5-3.4 2.5M4.8 0.5l3.4 2.5-3.4 2.5" fill="none" stroke="#000" stroke-width="1.7"/></svg>
<svg class="cj" style="left:722px;top:60px" width="22" height="12"><path fill="#000" d="M2 0h1v1h-1zM15 0h1v1h-1zM0 1h6v1h-6zM7 1h3v1h-3zM14 1h1v1h-1zM19 1h1v1h-1zM1 2h1v1h-1zM4 2h1v1h-1zM6 2h1v1h-1zM9 2h1v1h-1zM14 2h1v1h-1zM19 2h1v1h-1zM1 3h1v1h-1zM4 3h1v1h-1zM6 3h1v1h-1zM9 3h1v1h-1zM13 3h1v1h-1zM20 3h1v1h-1zM1 4h1v1h-1zM3 4h1v1h-1zM6 4h1v1h-1zM8 4h1v1h-1zM12 4h2v1h-2zM21 4h1v1h-1zM0 5h7v1h-7zM8 5h1v1h-1zM12 5h10v1h-10zM6 6h1v1h-1zM9 6h1v1h-1zM15 6h1v1h-1zM20 6h1v1h-1zM0 7h5v1h-5zM6 7h1v1h-1zM9 7h1v1h-1zM15 7h1v1h-1zM20 7h1v1h-1zM0 8h1v1h-1zM4 8h1v1h-1zM6 8h1v1h-1zM9 8h1v1h-1zM15 8h1v1h-1zM20 8h1v1h-1zM0 9h1v1h-1zM4 9h1v1h-1zM6 9h1v1h-1zM8 9h2v1h-2zM14 9h1v1h-1zM19 9h1v1h-1zM0 10h5v1h-5zM6 10h1v1h-1zM13 10h2v1h-2zM19 10h1v1h-1zM0 11h1v1h-1zM4 11h1v1h-1zM12 11h1v1h-1zM17 11h3v1h-3z"/></svg>
<svg style="left:774px;top:62px;" width="7" height="5" viewBox="0 0 7 5"><path d="M0 0h6l-3 4z" fill="#000"/></svg>
<svg style="left:811px;top:54px;" width="25" height="22" viewBox="0 0 25 22"><g stroke="#6E6C60" stroke-width="1" opacity="0.75"><path d="M1 1.5h23" opacity="1"/><path d="M1 4.5h23" stroke="#C8A8A8"/><path d="M1 12.5h23M1 15h23M1 17.5h23M1 20.5h23M4.5 1v20M12.5 1v20M20.5 1v20"/></g><rect x="1" y="7" width="23" height="2.8" fill="#20E020"/></svg>
<svg style="left:866px;top:57px;" width="22" height="18" viewBox="0 0 22 18"><path d="M1 15.3L9.8 0.6 16.2 15.3z" fill="none" stroke="#333" stroke-width="1.3" stroke-linejoin="round"/><circle cx="13.8" cy="11.3" r="4" fill="#F6C838" opacity="0.85"/></svg>
<div style="left:4px;top:83px;width:283px;height:1px;background:#C5C2B2;"></div>
<div style="left:4px;top:98px;width:283px;height:1px;background:#C5C2B2;"></div>
<div style="left:286px;top:83px;width:1px;height:16px;background:#C5C2B2;"></div>
<svg class="cj" style="left:8px;top:83px" width="22" height="12"><path fill="#000" d="M7 0h1v1h-1zM13 0h1v1h-1zM17 0h1v1h-1zM1 1h1v1h-1zM7 1h1v1h-1zM13 1h1v1h-1zM17 1h1v1h-1zM1 2h1v1h-1zM4 2h6v1h-6zM12 2h10v1h-10zM0 3h1v1h-1zM3 3h1v1h-1zM7 3h1v1h-1zM13 3h1v1h-1zM16 3h1v1h-1zM21 3h1v1h-1zM0 4h3v1h-3zM7 4h1v1h-1zM13 4h3v1h-3zM17 4h1v1h-1zM21 4h1v1h-1zM2 5h1v1h-1zM4 5h6v1h-6zM13 5h2v1h-2zM17 5h1v1h-1zM21 5h1v1h-1zM1 6h1v1h-1zM12 6h2v1h-2zM17 6h1v1h-1zM19 6h1v1h-1zM21 6h1v1h-1zM0 7h10v1h-10zM12 7h2v1h-2zM16 7h1v1h-1zM19 7h1v1h-1zM21 7h1v1h-1zM4 8h1v1h-1zM9 8h1v1h-1zM11 8h1v1h-1zM13 8h1v1h-1zM16 8h4v1h-4zM21 8h1v1h-1zM2 9h3v1h-3zM9 9h1v1h-1zM13 9h1v1h-1zM21 9h1v1h-1zM0 10h2v1h-2zM4 10h6v1h-6zM13 10h1v1h-1zM21 10h1v1h-1zM4 11h1v1h-1zM9 11h1v1h-1zM13 11h1v1h-1zM19 11h2v1h-2z"/></svg>
<svg style="left:275px;top:87px;" width="9" height="8" viewBox="0 0 9 8"><path d="M0.8 0.8l7.4 6.4M8.2 0.8L0.8 7.2" stroke="#000" stroke-width="1.7"/></svg>
<div style="left:31px;top:101px;width:256px;height:474px;background:#fff;border:1px solid #7F8FD0;border-left-color:#7A8590;border-right-color:#7A8590;box-sizing:border-box;"></div>
<div style="left:7px;top:103px;width:22px;height:22px;border:1px solid #8CA0B8;border-radius:3px;background:#F4F3EE;box-sizing:border-box;"></div>
<svg style="left:9px;top:106px;" width="17" height="17" viewBox="0 0 17 17"><rect x="0.5" y="0.5" width="16" height="16" fill="#fff" stroke="#555"/><path d="M4 3v11" stroke="#333" stroke-width="1.2"/><path d="M6 5h8M6 8.5h8M6 12h8" stroke="#444" stroke-width="1.3"/></svg>
<svg style="left:9px;top:128px;" width="17" height="17" viewBox="0 0 17 17"><defs><linearGradient id="gBm" x1="0" y1="0" x2="1" y2="1"><stop offset="0" stop-color="#2A2A2A"/><stop offset="1" stop-color="#8A8A8A"/></linearGradient></defs><rect x="0.5" y="0.5" width="15" height="15" fill="#fff" stroke="#6A6A6A"/><path d="M4.5 3.5q0-1 1-1h5.5v10.5l-3-2.2-3.5 2.2z" fill="url(#gBm)"/></svg>
<svg style="left:9px;top:151px;" width="17" height="17" viewBox="0 0 17 17"><circle cx="8.5" cy="2.5" r="1.3" fill="#111"/><circle cx="8.5" cy="11.5" r="1.3" fill="#111"/><path d="M1 7h15" stroke="#555" stroke-width="1.2"/></svg>
<svg style="left:9px;top:172px;" width="17" height="17" viewBox="0 0 17 17"><path d="M1 3.5h15M1 7.5h15M1 11.5h15" stroke="#333" stroke-width="1.2"/></svg>
<svg style="left:9px;top:194px;" width="17" height="17" viewBox="0 0 17 17"><path d="M1 6.8h12M1 10.2h12" stroke="#555" stroke-width="1.1"/><path d="M9.5 3.5l5.5 5-5.5 5" fill="none" stroke="#444" stroke-width="1.1"/></svg>
<svg style="left:11px;top:216px;" width="14" height="17" viewBox="0 0 14 17"><path d="M5 0.5q-2 0-2 2.5v3.5q0 2-1.8 2 1.8 0 1.8 2v3.5q0 2.5 2 2.5M8.5 0.5q2 0 2 2.5v3.5q0 2 1.8 2-1.8 0-1.8 2v3.5q0 2.5-2 2.5" fill="none" stroke="#333" stroke-width="1.2"/></svg>
<svg style="left:12px;top:238px;" width="12" height="17" viewBox="0 0 12 17"><path d="M2 1.5q2-1 3 1l6 13.5" fill="none" stroke="#222" stroke-width="1.6"/><path d="M7.2 6.5L1.5 16" fill="none" stroke="#222" stroke-width="1.7"/></svg>
<span class="t" style="left:9px;top:260px;font-family:Liberation Serif;color:#222;font-size:21px;">ж</span>
<svg style="left:9px;top:282px;" width="17" height="17" viewBox="0 0 17 17"><path d="M2.5 1.5l6 14 6-14M5 8h7" fill="none" stroke="#333" stroke-width="1.2"/></svg>
<svg style="left:9px;top:304px;" width="17" height="17" viewBox="0 0 17 17"><path d="M1.5 9.8L3.8 8.6 5.8 11.8Q9.5 4.5 15.8 0.3 10.5 5.5 6.5 15.6H5.2Z" fill="#111"/></svg>
<svg style="left:9px;top:326px;" width="17" height="17" viewBox="0 0 17 17"><circle cx="8.5" cy="8.5" r="7" fill="none" stroke="#333" stroke-width="1.2"/><circle cx="6" cy="6.5" r="0.9" fill="#333"/><circle cx="11" cy="6.5" r="0.9" fill="#333"/><path d="M4.8 10q3.7 3.5 7.4 0" fill="none" stroke="#333" stroke-width="1.1"/></svg>
<span class="t" style="left:12px;top:351px;font-family:Liberation Serif;color:#222;font-size:23px;">á</span>
<svg style="left:9px;top:370px;" width="17" height="17" viewBox="0 0 17 17"><rect x="0.5" y="0.5" width="15" height="15" fill="#fff" stroke="#666"/><path d="M8 8q-3-4-5-2t0 4 5-2 5-2 0 4-5-2" fill="none" stroke="#1A6A1A" stroke-width="1.6"/></svg>
<svg style="left:9px;top:392px;" width="17" height="17" viewBox="0 0 17 17"><rect x="0.5" y="0.5" width="15" height="15" fill="#fff" stroke="#666"/><path d="M8 2v12M3 5l10 6M13 5L3 11" stroke="#1A7A1A" stroke-width="1.5"/></svg>
<svg style="left:9px;top:414px;" width="17" height="17" viewBox="0 0 17 17"><rect x="0.5" y="0.5" width="15" height="15" fill="#fff" stroke="#666"/><text x="1.5" y="13" font-family="Liberation Serif" font-size="12" fill="#111">([.</text></svg>
<svg style="left:9px;top:436px;" width="17" height="17" viewBox="0 0 17 17"><rect x="0.5" y="0.5" width="15" height="15" fill="#fff" stroke="#8A8A8A"/><text x="8" y="13" text-anchor="middle" font-family="Liberation Serif" font-size="13" fill="#707070" textLength="12" lengthAdjust="spacingAndGlyphs">PS</text></svg>
<svg style="left:9px;top:458px;" width="17" height="17" viewBox="0 0 17 17"><rect x="0.5" y="0.5" width="15" height="15" fill="#fff" stroke="#8A8A8A"/><text x="8" y="12" text-anchor="middle" font-family="Liberation Serif" font-size="10" fill="#707070" textLength="13" lengthAdjust="spacingAndGlyphs">MP</text></svg>
<svg style="left:9px;top:480px;" width="17" height="17" viewBox="0 0 17 17"><rect x="0.5" y="0.5" width="15" height="15" fill="#fff" stroke="#8A8A8A"/><text x="8" y="13" text-anchor="middle" font-family="Liberation Serif" font-size="13" fill="#707070" textLength="12" lengthAdjust="spacingAndGlyphs">TI</text></svg>
<svg style="left:9px;top:502px;" width="17" height="17" viewBox="0 0 17 17"><rect x="0.5" y="0.5" width="15" height="15" fill="#fff" stroke="#8A8A8A"/><text x="8" y="13" text-anchor="middle" font-family="Liberation Serif" font-size="13" fill="#707070" textLength="12" lengthAdjust="spacingAndGlyphs">AS</text></svg>
<div style="left:292px;top:81px;width:26px;height:253px;background:#ECE9D8;border-left:1px solid #fff;border-right:1px solid #A8A598;border-bottom:1px solid #C8C4B4;box-sizing:border-box;"></div>
<svg style="left:297px;top:87px;" width="14" height="13" viewBox="0 0 14 13"><path d="M7 0.5l5 4.5v4l-5 3.5-5-3.5v-4z" fill="#DCD8C8"/><path d="M4 6h6" stroke="#E6E3D6" stroke-width="1.5"/></svg>
<svg style="left:297px;top:109px;" width="14" height="13" viewBox="0 0 14 13"><path d="M7 0.5l5 4.5v4l-5 3.5-5-3.5v-4z" fill="#DCD8C8"/><path d="M7 3v7" stroke="#E6E3D6" stroke-width="1.5"/></svg>
<div style="left:296px;top:130px;width:19px;height:1px;background:#C5C2B2;"></div>
<svg style="left:296px;top:136px;" width="16" height="16" viewBox="0 0 16 16"><rect x="0.5" y="0.5" width="15" height="15" fill="#fff" stroke="#777"/><text x="3" y="13" font-family="Liberation Serif" font-size="13" fill="#222">B</text></svg>
<svg style="left:296px;top:158px;" width="16" height="16" viewBox="0 0 16 16"><rect x="0.5" y="0.5" width="15" height="15" fill="#fff" stroke="#777"/><path d="M9.5 2.5l-3 11M7 2.5h5M4 13.5h5" stroke="#222" stroke-width="1"/></svg>
<svg style="left:296px;top:180px;" width="16" height="16" viewBox="0 0 16 16"><rect x="0.5" y="0.5" width="15" height="15" fill="#fff" stroke="#777"/><text x="3" y="12" font-family="Liberation Serif" font-size="12" fill="#222">U</text><path d="M3 14h10" stroke="#222"/></svg>
<svg style="left:296px;top:202px;" width="16" height="16" viewBox="0 0 16 16"><rect x="1.5" y="0.5" width="13" height="15" fill="#FAFAFA" stroke="#DCDCDC"/><path d="M4 3.5h8" stroke="#A8A8A8" stroke-width="1"/><path d="M4 5.5h6" stroke="#A8A8A8" stroke-width="1"/><path d="M4 7.5h8" stroke="#A8A8A8" stroke-width="1"/><path d="M4 9.5h6" stroke="#A8A8A8" stroke-width="1"/><path d="M4 11.5h8" stroke="#A8A8A8" stroke-width="1"/><path d="M4 13.5h6" stroke="#A8A8A8" stroke-width="1"/></svg>
<svg style="left:296px;top:224px;" width="16" height="16" viewBox="0 0 16 16"><rect x="1.5" y="0.5" width="13" height="15" fill="#FAFAFA" stroke="#DCDCDC"/><path d="M4 3.5h8" stroke="#A8A8A8" stroke-width="1"/><path d="M6 5.5h6" stroke="#A8A8A8" stroke-width="1"/><path d="M4 7.5h8" stroke="#A8A8A8" stroke-width="1"/><path d="M6 9.5h6" stroke="#A8A8A8" stroke-width="1"/><path d="M4 11.5h8" stroke="#A8A8A8" stroke-width="1"/><path d="M6 13.5h6" stroke="#A8A8A8" stroke-width="1"/></svg>
<svg style="left:296px;top:246px;" width="16" height="16" viewBox="0 0 16 16"><rect x="1.5" y="0.5" width="13" height="15" fill="#FAFAFA" stroke="#DCDCDC"/><path d="M4 3.5h8" stroke="#A8A8A8" stroke-width="1"/><path d="M6 5.5h6" stroke="#A8A8A8" stroke-width="1"/><path d="M4 7.5h8" stroke="#A8A8A8" stroke-width="1"/><path d="M6 9.5h6" stroke="#A8A8A8" stroke-width="1"/><path d="M4 11.5h8" stroke="#A8A8A8" stroke-width="1"/><path d="M6 13.5h6" stroke="#A8A8A8" stroke-width="1"/></svg>
<div style="left:296px;top:268px;width:19px;height:1px;background:#C5C2B2;"></div>
<svg style="left:296px;top:275px;" width="16" height="16" viewBox="0 0 16 16"><path d="M13 3v7H5" fill="none" stroke="#111" stroke-width="1.8"/><path d="M7 6.5L3 10l4 3.5z" fill="#111"/></svg>
<div style="left:296px;top:297px;width:19px;height:1px;background:#C5C2B2;"></div>
<svg style="left:299px;top:322px;" width="9" height="10" viewBox="0 0 9 10"><path d="M1 1l3.5 3 3.5-3M1 5.5l3.5 3 3.5-3" fill="none" stroke="#000" stroke-width="1.6"/></svg>
<div style="left:291px;top:339px;width:614px;height:236px;border:1px solid #000;box-sizing:border-box;background:#ECE9D8;"></div>
<div style="left:292px;top:340px;width:612px;height:1px;background:#fff;"></div>
<div style="left:292px;top:340px;width:1px;height:234px;background:#fff;"></div>
<div style="left:292px;top:364px;width:612px;height:1px;background:#B8B5A6;"></div>
<div style="left:296px;top:346px;width:69px;height:18px;background:linear-gradient(#FFFFFF,#F2F1EA 60%,#E4E2D6);border:1px solid #A8A59A;border-bottom:none;border-radius:3px 3px 0 0;box-sizing:border-box;"></div>
<span class="t" style="left:306px;top:349px;font-family:Liberation Mono;font-size:12px;letter-spacing:-1.2px;color:#000;-webkit-text-stroke:0.25px #000;">Messages</span>
<div style="left:364px;top:344px;width:46px;height:21px;background:#FCFCFE;border-left:1px solid #B8B5A6;border-right:1px solid #B8B5A6;box-sizing:border-box;"></div>
<div style="left:365px;top:344px;width:44px;height:2px;background:#FFC83C;border-radius:2px 2px 0 0;"></div>
<div style="left:365px;top:346px;width:44px;height:1px;background:#F8A840;"></div>
<span class="t" style="left:378px;top:348px;font-family:Liberation Mono;font-size:12px;letter-spacing:-1.2px;color:#000;-webkit-text-stroke:0.25px #000;">Log</span>
<div style="left:409px;top:346px;width:46px;height:18px;background:linear-gradient(#FFFFFF,#F2F1EA 60%,#E4E2D6);border:1px solid #A8A59A;border-bottom:none;border-radius:3px 3px 0 0;box-sizing:border-box;"></div>
<svg class="cj" style="left:420px;top:348px" width="23" height="12"><path fill="#000" d="M16 0h1v1h-1zM19 0h1v1h-1zM1 1h4v1h-4zM6 1h6v1h-6zM13 1h1v1h-1zM16 1h1v1h-1zM19 1h4v1h-4zM3 2h1v1h-1zM8 2h1v1h-1zM13 2h1v1h-1zM16 2h1v1h-1zM18 2h1v1h-1zM20 2h1v1h-1zM1 3h3v1h-3zM6 3h5v1h-5zM13 3h1v1h-1zM16 3h1v1h-1zM18 3h1v1h-1zM20 3h2v1h-2zM3 4h1v1h-1zM6 4h1v1h-1zM10 4h1v1h-1zM16 4h1v1h-1zM21 4h1v1h-1zM0 5h5v1h-5zM6 5h1v1h-1zM8 5h1v1h-1zM10 5h1v1h-1zM14 5h8v1h-8zM2 6h1v1h-1zM4 6h1v1h-1zM6 6h1v1h-1zM8 6h1v1h-1zM10 6h1v1h-1zM14 6h1v1h-1zM21 6h1v1h-1zM2 7h1v1h-1zM4 7h1v1h-1zM6 7h1v1h-1zM8 7h1v1h-1zM10 7h1v1h-1zM14 7h1v1h-1zM17 7h1v1h-1zM21 7h1v1h-1zM2 8h1v1h-1zM6 8h1v1h-1zM8 8h1v1h-1zM10 8h1v1h-1zM14 8h1v1h-1zM17 8h1v1h-1zM21 8h1v1h-1zM2 9h1v1h-1zM7 9h1v1h-1zM9 9h1v1h-1zM17 9h2v1h-2zM2 10h1v1h-1zM6 10h2v1h-2zM9 10h2v1h-2zM15 10h2v1h-2zM18 10h1v1h-1zM22 10h1v1h-1zM1 11h2v1h-2zM5 11h1v1h-1zM13 11h2v1h-2zM19 11h4v1h-4z"/></svg>
<div style="left:456px;top:346px;width:105px;height:18px;background:linear-gradient(#FFFFFF,#F2F1EA 60%,#E4E2D6);border:1px solid #A8A59A;border-bottom:none;border-radius:3px 3px 0 0;box-sizing:border-box;"></div>
<span class="t" style="left:468px;top:349px;font-family:Liberation Mono;font-size:12px;letter-spacing:-1.2px;color:#000;-webkit-text-stroke:0.25px #000;">Search Results</span>
<div style="left:564px;top:344px;width:55px;height:18px;background:linear-gradient(#FFFFFF,#F4F4F2);border:1px solid #8FA5BF;border-radius:3px;box-sizing:border-box;"></div>
<span class="t" style="left:574px;top:348px;font-family:Liberation Mono;font-size:12px;letter-spacing:-1.2px;color:#000;-webkit-text-stroke:0.25px #000;">Issues</span>
<span class="t" style="left:628px;top:347px;font-family:Liberation Mono;font-size:12px;letter-spacing:-1.2px;color:#000;-webkit-text-stroke:0.25px #000;">Log File</span>
<span class="t" style="left:695px;top:347px;font-family:Liberation Mono;font-size:12px;letter-spacing:-1.2px;color:#000;-webkit-text-stroke:0.25px #000;">Issues and Log</span>
<svg style="left:793px;top:346px;" width="18" height="18" viewBox="0 0 18 18"><path d="M1.5 7l7-6v3.5h6v6h-6V14z" fill="url(#gYel)"/><circle cx="12" cy="11" r="3.8" fill="#D81818"/><rect x="9.5" y="10.2" width="5" height="1.6" fill="#fff"/></svg>
<svg style="left:816px;top:346px;" width="18" height="18" viewBox="0 0 18 18"><path d="M15 7l-7-6v3.5H2v6h6V14z" fill="url(#gYel)"/><circle cx="12" cy="11" r="3.8" fill="#D81818"/><rect x="9.5" y="10.2" width="5" height="1.6" fill="#fff"/></svg>
<svg style="left:884px;top:347px;" width="12" height="12" viewBox="0 0 12 12"><path d="M1 1l10 10M11 1L1 11" stroke="#111" stroke-width="1.6"/></svg>
<div style="left:292px;top:365px;width:612px;height:20px;background:linear-gradient(#EBEADB,#E8E6D6 70%,#D6D2C0 95%,#C8C4B0);"></div>
<div style="left:301px;top:368px;width:1px;height:14px;background:#C5C2B2;"></div>
<div style="left:302px;top:368px;width:1px;height:14px;background:#fff;"></div>
<div style="left:422px;top:368px;width:1px;height:14px;background:#C5C2B2;"></div>
<div style="left:423px;top:368px;width:1px;height:14px;background:#fff;"></div>
<div style="left:470px;top:368px;width:1px;height:14px;background:#C5C2B2;"></div>
<div style="left:471px;top:368px;width:1px;height:14px;background:#fff;"></div>
<span class="t" style="left:296px;top:368px;font-family:Liberation Sans;font-size:11px;color:#333;">1</span>
<svg class="cj" style="left:352px;top:370px" width="22" height="12"><path fill="#000" d="M12 0h6v1h-6zM21 0h1v1h-1zM2 1h1v1h-1zM4 1h1v1h-1zM7 1h1v1h-1zM13 1h1v1h-1zM16 1h1v1h-1zM18 1h1v1h-1zM21 1h1v1h-1zM2 2h1v1h-1zM4 2h1v1h-1zM7 2h1v1h-1zM13 2h1v1h-1zM16 2h1v1h-1zM18 2h1v1h-1zM21 2h1v1h-1zM0 3h10v1h-10zM12 3h7v1h-7zM21 3h1v1h-1zM3 4h2v1h-2zM6 4h1v1h-1zM13 4h1v1h-1zM16 4h1v1h-1zM18 4h1v1h-1zM21 4h1v1h-1zM2 5h1v1h-1zM4 5h1v1h-1zM7 5h2v1h-2zM13 5h1v1h-1zM16 5h1v1h-1zM21 5h1v1h-1zM0 6h2v1h-2zM4 6h1v1h-1zM9 6h1v1h-1zM12 6h1v1h-1zM16 6h1v1h-1zM19 6h3v1h-3zM4 7h1v1h-1zM17 7h1v1h-1zM0 8h10v1h-10zM13 8h8v1h-8zM4 9h2v1h-2zM17 9h1v1h-1zM2 10h2v1h-2zM6 10h2v1h-2zM17 10h1v1h-1zM0 11h2v1h-2zM8 11h2v1h-2zM12 11h10v1h-10z"/></svg>
<svg class="cj" style="left:442px;top:370px" width="11" height="12"><path fill="#000" d="M3 0h1v1h-1zM2 1h1v1h-1zM5 1h6v1h-6zM1 2h1v1h-1zM3 3h1v1h-1zM2 4h1v1h-1zM5 4h6v1h-6zM1 5h2v1h-2zM9 5h1v1h-1zM0 6h3v1h-3zM9 6h1v1h-1zM2 7h1v1h-1zM9 7h1v1h-1zM2 8h1v1h-1zM9 8h1v1h-1zM2 9h1v1h-1zM9 9h1v1h-1zM2 10h1v1h-1zM9 10h1v1h-1zM2 11h1v1h-1zM7 11h2v1h-2z"/></svg>
<svg class="cj" style="left:676px;top:370px" width="23" height="12"><path fill="#000" d="M3 0h1v1h-1zM7 0h1v1h-1zM17 0h1v1h-1zM2 1h1v1h-1zM7 1h1v1h-1zM14 1h8v1h-8zM2 2h1v1h-1zM4 2h7v1h-7zM14 2h1v1h-1zM21 2h1v1h-1zM2 3h1v1h-1zM14 3h8v1h-8zM1 4h2v1h-2zM5 4h5v1h-5zM14 4h1v1h-1zM21 4h1v1h-1zM0 5h1v1h-1zM2 5h1v1h-1zM14 5h8v1h-8zM2 6h1v1h-1zM5 6h5v1h-5zM14 6h1v1h-1zM21 6h1v1h-1zM2 7h1v1h-1zM14 7h8v1h-8zM2 8h1v1h-1zM4 8h7v1h-7zM17 8h1v1h-1zM2 9h1v1h-1zM4 9h1v1h-1zM10 9h1v1h-1zM13 9h1v1h-1zM15 9h1v1h-1zM18 9h1v1h-1zM22 9h1v1h-1zM2 10h1v1h-1zM4 10h1v1h-1zM10 10h1v1h-1zM13 10h1v1h-1zM15 10h1v1h-1zM20 10h1v1h-1zM22 10h1v1h-1zM2 11h1v1h-1zM4 11h7v1h-7zM15 11h6v1h-6z"/></svg>
<div style="left:292px;top:385px;width:612px;height:189px;background:#fff;"></div>
<div style="left:4px;top:574px;width:27px;height:1px;background:#A8A496;"></div>
<div style="left:7px;top:578px;width:22px;height:22px;border:1px solid #8E9AA6;border-radius:4px;background:#FAFAF6;box-sizing:border-box;"></div>
<svg style="left:10px;top:582px;" width="16" height="16" viewBox="0 0 16 16"><rect x="0.5" y="0.5" width="15" height="15" fill="#808080" stroke="#505050"/><rect x="1" y="1" width="3.5" height="14" fill="#FFF"/><rect x="4.5" y="1" width="1" height="14" fill="#555"/><rect x="5" y="10" width="10" height="1.5" fill="#333"/></svg>
<div style="left:36px;top:578px;width:22px;height:22px;border:1px solid #8E9AA6;border-radius:4px;background:#FAFAF6;box-sizing:border-box;"></div>
<svg style="left:39px;top:582px;" width="16" height="16" viewBox="0 0 16 16"><rect x="0.5" y="0.5" width="15" height="15" fill="#808080" stroke="#505050"/><rect x="5.5" y="11" width="9.5" height="4" fill="#FFF"/><rect x="4.5" y="1" width="1.2" height="14" fill="#333"/><rect x="5" y="10" width="10" height="1" fill="#444"/></svg>
<div style="left:548px;top:578px;width:1px;height:22px;background:#C5C2B2;"></div>
<div style="left:549px;top:578px;width:1px;height:22px;background:#fff;"></div>
<div style="left:609px;top:578px;width:1px;height:22px;background:#C5C2B2;"></div>
<div style="left:610px;top:578px;width:1px;height:22px;background:#fff;"></div>
<div style="left:694px;top:578px;width:1px;height:22px;background:#C5C2B2;"></div>
<div style="left:695px;top:578px;width:1px;height:22px;background:#fff;"></div>
<div style="left:742px;top:578px;width:1px;height:22px;background:#C5C2B2;"></div>
<div style="left:743px;top:578px;width:1px;height:22px;background:#fff;"></div>
<div style="left:808px;top:578px;width:1px;height:22px;background:#C5C2B2;"></div>
<div style="left:809px;top:578px;width:1px;height:22px;background:#fff;"></div>
<div style="left:835px;top:578px;width:1px;height:22px;background:#C5C2B2;"></div>
<div style="left:836px;top:578px;width:1px;height:22px;background:#fff;"></div>
<div style="left:861px;top:578px;width:1px;height:22px;background:#C5C2B2;"></div>
<div style="left:862px;top:578px;width:1px;height:22px;background:#fff;"></div>
<div style="left:887px;top:578px;width:1px;height:22px;background:#C5C2B2;"></div>
<div style="left:888px;top:578px;width:1px;height:22px;background:#fff;"></div>
<span class="t" style="left:563px;top:584px;font-family:Liberation Mono;font-size:12px;letter-spacing:-1.2px;color:#000;-webkit-text-stroke:0.25px #000;">&lt;none&gt;</span>
<svg style="left:599px;top:590px;" width="6" height="4" viewBox="0 0 6 4"><path d="M0 0h6l-3 4z" fill="#000"/></svg>
<span class="t" style="left:623px;top:584px;font-family:Liberation Mono;font-size:12px;letter-spacing:-1.2px;color:#000;-webkit-text-stroke:0.25px #000;">Encoding</span>
<svg style="left:684px;top:590px;" width="6" height="4" viewBox="0 0 6 4"><path d="M0 0h6l-3 4z" fill="#000"/></svg>
<span class="t" style="left:705px;top:584px;font-family:Liberation Mono;font-size:12px;letter-spacing:-1.2px;color:#000;-webkit-text-stroke:0.25px #000;">Ready</span>
<svg class="cj" style="left:753px;top:583px" width="47" height="12"><path fill="#000" d="M13 0h1v1h-1zM17 0h1v1h-1zM20 0h1v1h-1zM25 0h1v1h-1zM29 0h1v1h-1zM32 0h1v1h-1zM42 0h1v1h-1zM44 0h1v1h-1zM0 1h10v1h-10zM14 1h1v1h-1zM17 1h1v1h-1zM19 1h1v1h-1zM25 1h1v1h-1zM27 1h7v1h-7zM42 1h1v1h-1zM45 1h1v1h-1zM5 2h1v1h-1zM12 2h10v1h-10zM25 2h1v1h-1zM29 2h1v1h-1zM32 2h1v1h-1zM36 2h10v1h-10zM5 3h1v1h-1zM12 3h1v1h-1zM21 3h1v1h-1zM24 3h3v1h-3zM28 3h6v1h-6zM42 3h1v1h-1zM1 4h1v1h-1zM5 4h1v1h-1zM12 4h1v1h-1zM14 4h6v1h-6zM21 4h1v1h-1zM25 4h1v1h-1zM28 4h1v1h-1zM33 4h1v1h-1zM42 4h1v1h-1zM1 5h1v1h-1zM5 5h5v1h-5zM14 5h1v1h-1zM19 5h1v1h-1zM25 5h2v1h-2zM28 5h6v1h-6zM36 5h5v1h-5zM42 5h1v1h-1zM1 6h1v1h-1zM5 6h1v1h-1zM14 6h6v1h-6zM24 6h3v1h-3zM28 6h6v1h-6zM38 6h1v1h-1zM42 6h1v1h-1zM1 7h1v1h-1zM5 7h1v1h-1zM17 7h1v1h-1zM24 7h2v1h-2zM30 7h1v1h-1zM38 7h1v1h-1zM42 7h1v1h-1zM1 8h1v1h-1zM5 8h1v1h-1zM13 8h8v1h-8zM23 8h1v1h-1zM25 8h1v1h-1zM27 8h7v1h-7zM38 8h1v1h-1zM43 8h1v1h-1zM1 9h1v1h-1zM5 9h1v1h-1zM13 9h1v1h-1zM17 9h1v1h-1zM20 9h1v1h-1zM25 9h1v1h-1zM30 9h2v1h-2zM38 9h1v1h-1zM40 9h2v1h-2zM43 9h1v1h-1zM46 9h1v1h-1zM0 10h10v1h-10zM13 10h1v1h-1zM17 10h1v1h-1zM20 10h1v1h-1zM25 10h1v1h-1zM28 10h2v1h-2zM32 10h1v1h-1zM36 10h4v1h-4zM43 10h1v1h-1zM45 10h1v1h-1zM13 11h1v1h-1zM17 11h1v1h-1zM19 11h2v1h-2zM25 11h1v1h-1zM27 11h2v1h-2zM33 11h1v1h-1zM44 11h2v1h-2z"/></svg>
<svg style="left:815px;top:581px;" width="17" height="16" viewBox="0 0 17 16"><rect x="0" y="3" width="5" height="12" fill="#F8F4F8"/><path d="M0 3h4" stroke="#A89AA8" stroke-width="0.8"/><path d="M3.5 1.5q0.5-1 2-1h8.5q1 0 1 1v14l-5.75-3.2-5.75 3.2z" fill="#7E0C84"/><path d="M5 2h7v10l-3.5-1.5z" fill="#B040B8" opacity="0.45"/><text x="9.25" y="11.5" text-anchor="middle" font-family="Liberation Sans" font-weight="bold" font-size="11" fill="#fff">1</text></svg>
<svg style="left:841px;top:581px;" width="17" height="16" viewBox="0 0 17 16"><rect x="0" y="3" width="5" height="12" fill="#F8F4F8"/><path d="M0 3h4" stroke="#A89AA8" stroke-width="0.8"/><path d="M3.5 1.5q0.5-1 2-1h8.5q1 0 1 1v14l-5.75-3.2-5.75 3.2z" fill="#7E0C84"/><path d="M5 2h7v10l-3.5-1.5z" fill="#B040B8" opacity="0.45"/><text x="9.25" y="11.5" text-anchor="middle" font-family="Liberation Sans" font-weight="bold" font-size="11" fill="#fff">2</text></svg>
<svg style="left:866px;top:581px;" width="17" height="16" viewBox="0 0 17 16"><rect x="0" y="3" width="5" height="12" fill="#F8F4F8"/><path d="M0 3h4" stroke="#A89AA8" stroke-width="0.8"/><path d="M3.5 1.5q0.5-1 2-1h8.5q1 0 1 1v14l-5.75-3.2-5.75 3.2z" fill="#7E0C84"/><path d="M5 2h7v10l-3.5-1.5z" fill="#B040B8" opacity="0.45"/><text x="9.25" y="11.5" text-anchor="middle" font-family="Liberation Sans" font-weight="bold" font-size="11" fill="#fff">3</text></svg>
<div style="left:902px;top:590px;width:2px;height:2px;background:#C1BCA7;"></div>
<div style="left:898px;top:594px;width:2px;height:2px;background:#C1BCA7;"></div>
<div style="left:902px;top:594px;width:2px;height:2px;background:#C1BCA7;"></div>
<div style="left:894px;top:598px;width:2px;height:2px;background:#C1BCA7;"></div>
<div style="left:898px;top:598px;width:2px;height:2px;background:#C1BCA7;"></div>
<div style="left:902px;top:598px;width:2px;height:2px;background:#C1BCA7;"></div>
</body></html>
